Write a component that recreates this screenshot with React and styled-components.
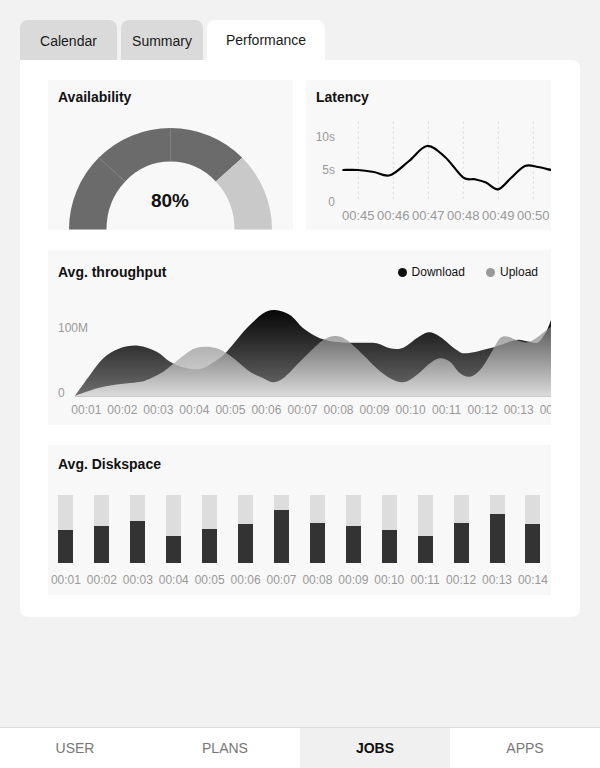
import React from 'react';
import styled, { createGlobalStyle } from 'styled-components';

const GlobalStyle = createGlobalStyle`
  html, body {
    margin: 0;
    padding: 0;
    background: #f2f2f2;
    font-family: 'Liberation Sans', Arial, sans-serif;
    color: #111;
  }
`;

const Page = styled.div`
  display: flex;
  flex-direction: column;
  min-height: 100vh;
`;

const Main = styled.main`
  flex: 1;
  padding: 20px 20px 0;
`;

const TabBar = styled.div`
  display: flex;
  gap: 4px;
`;

const Tab = styled.div`
  display: flex;
  align-items: center;
  justify-content: center;
  height: 40px;
  width: ${(props) => props.width}px;
  box-sizing: border-box;
  padding-top: ${(props) => (props.active ? '0' : '2px')};
  border-radius: 8px 8px 0 0;
  background: ${(props) => (props.active ? '#ffffff' : '#dadada')};
  font-size: 14px;
  color: #1a1a1a;
`;

const Panel = styled.section`
  display: flex;
  flex-direction: column;
  gap: 20px;
  background: #fff;
  border-radius: 0 8px 8px 8px;
  padding: 20px 29px 22px 28px;
`;

const Row = styled.div`
  display: grid;
  grid-template-columns: 245px 245px;
  gap: 13px;
`;

const Card = styled.div`
  display: flex;
  flex-direction: column;
  height: ${(props) => props.height}px;
  background: #f8f8f8;
  overflow: hidden;
`;

const CardHeader = styled.div`
  display: flex;
  align-items: center;
  justify-content: space-between;
  padding: ${(props) => props.top}px 13px 0 10px;
`;

const Title = styled.h3`
  margin: 0;
  font-size: 14px;
  line-height: 16px;
  font-weight: 700;
  color: #111;
`;

const Legend = styled.div`
  display: flex;
  align-items: center;
  gap: 21px;
`;

const LegendItem = styled.div`
  display: flex;
  align-items: center;
  gap: 5px;
  font-size: 12px;
  color: #111;
`;

const Dot = styled.span`
  width: 9px;
  height: 9px;
  border-radius: 50%;
  background: ${(props) => props.color};
`;

const Chart = styled.svg`
  display: block;
  flex-shrink: 0;
`;

const Bars = styled.div`
  display: flex;
  margin-top: 23px;
`;

const BarColumn = styled.div`
  display: flex;
  flex-direction: column;
  align-items: center;
  width: 36px;
`;

const BarTrack = styled.div`
  display: flex;
  flex-direction: column;
  justify-content: flex-end;
  width: 15px;
  height: 68px;
  background: #dddddd;
`;

const BarFill = styled.div`
  background: #333333;
`;

const BarLabel = styled.span`
  margin-top: 10px;
  font-size: 12px;
  line-height: 14px;
  color: #999;
  white-space: nowrap;
`;

const BottomNav = styled.nav`
  display: flex;
  height: 40px;
  border-top: 1px solid #dcdcdc;
  background: #fff;
`;

const NavItem = styled.div`
  flex: 1;
  display: flex;
  align-items: center;
  justify-content: center;
  font-size: 14px;
  font-weight: ${(props) => (props.active ? 700 : 400)};
  color: ${(props) => (props.active ? '#111' : '#777')};
  background: ${(props) => (props.active ? '#f0f0f0' : '#fff')};
`;

// catmull-rom -> cubic bezier
const smooth = (pts) => {
  let d = `M${pts[0][0]},${pts[0][1]}`;
  for (let i = 0; i < pts.length - 1; i++) {
    const p0 = pts[i - 1] || pts[i];
    const p1 = pts[i];
    const p2 = pts[i + 1];
    const p3 = pts[i + 2] || p2;
    const c1x = p1[0] + (p2[0] - p0[0]) / 6;
    const c1y = p1[1] + (p2[1] - p0[1]) / 6;
    const c2x = p2[0] - (p3[0] - p1[0]) / 6;
    const c2y = p2[1] - (p3[1] - p1[1]) / 6;
    d += ` C${c1x.toFixed(1)},${c1y.toFixed(1)} ${c2x.toFixed(1)},${c2y.toFixed(1)} ${p2[0]},${p2[1]}`;
  }
  return d;
};

const Gauge = () => {
  const cx = 122.5;
  const cy = 117.5;
  const R = 101.5;
  const rx = 64;
  const ry = 68;
  const rad = (a) => (a * Math.PI) / 180;
  const outer = (a) => [cx + R * Math.cos(rad(a)), cy - R * Math.sin(rad(a))];
  const inner = (a) => [cx + rx * Math.cos(rad(a)), cy - ry * Math.sin(rad(a))];
  const sector = (a1, a2) => {
    const o1 = outer(a1);
    const o2 = outer(a2);
    const i1 = inner(a1);
    const i2 = inner(a2);
    return `M${o1} A${R},${R} 0 0 1 ${o2} L${i2} A${rx},${ry} 0 0 0 ${i1} Z`;
  };
  const segments = [
    [180, 135, '#6b6b6b'],
    [135, 90, '#6b6b6b'],
    [90, 45, '#6b6b6b'],
    [45, 0, '#c9c9c9'],
  ];
  return (
    <Chart width="245" height="125" viewBox="0 -7 245 125">
      {segments.map(([a1, a2, c]) => (
        <path key={a1} d={sector(a1, a2)} fill={c} />
      ))}
      {[135, 90].map((a) => (
        <line key={a} x1={inner(a)[0]} y1={inner(a)[1]} x2={outer(a)[0]} y2={outer(a)[1]} stroke="#7c7c7c" strokeWidth="0.8" />
      ))}
      <text x={cx - 0.5} y="95.3" textAnchor="middle" fontSize="19" fontWeight="700" fill="#111">
        80%
      </text>
    </Chart>
  );
};

const latencyLine = [
  [37.3, 58], [52, 58], [68, 60], [84, 63.3], [103, 49], [121, 34], [139, 45],
  [157, 65.3], [169, 67.3], [180, 70.5], [192.3, 77.3], [205, 66], [219, 54],
  [232, 55], [245, 58],
];

const Latency = () => {
  const grid = [0, 1, 2, 3, 4, 5].map((i) => 52.3 + i * 35);
  const labels = ['00:45', '00:46', '00:47', '00:48', '00:49', '00:50'];
  return (
    <Chart width="245" height="125" viewBox="0 -7 245 125">
      {grid.map((x) => (
        <line key={x} x1={x} x2={x} y1="9.7" y2="89.7" stroke="#d6d6d6" strokeDasharray="2 3" />
      ))}
      {[['10s', 24.7], ['5s', 58], ['0', 89.7]].map(([t, y]) => (
        <text key={t} x="29" y={y + 4.3} textAnchor="end" fontSize="12" fill="#999">
          {t}
        </text>
      ))}
      {labels.map((t, i) => (
        <text key={t} x={grid[i]} y="108.3" textAnchor="middle" fontSize="13" fill="#999">
          {t}
        </text>
      ))}
      <path d={smooth(latencyLine)} fill="none" stroke="#000" strokeWidth="2.2" strokeLinecap="round" />
    </Chart>
  );
};

const download = [
  [27, 101.7], [42, 81], [55.3, 64.3], [72, 54.3], [90.3, 51.7], [108.7, 57.7],
  [122, 67.7], [136, 73.5], [152, 75], [166, 68], [178.7, 57.7], [198.7, 34.3],
  [215.3, 19.3], [227, 16], [242, 21], [255.3, 34.3], [268.7, 42.7], [282, 47],
  [298.7, 48.7], [315.3, 48.7], [328.7, 49.3], [342, 54.3], [355.3, 53.7],
  [368.7, 44.3], [380.3, 38.3], [392, 42.7], [408.7, 56], [418.7, 59.3], [442, 54.3],
  [452, 51], [468.7, 46], [480, 47.5], [490, 48.5], [498, 38], [503, 26],
];

const upload = [
  [27, 101.7], [55.3, 92.7], [88.7, 88.3], [98.7, 86], [115.3, 77.7], [132, 64.3],
  [145.3, 55], [157, 52.7], [168.7, 54.3], [178.7, 59.3], [190, 68], [202, 77.7],
  [215.3, 84.3], [225.3, 88.3], [235.3, 84.3], [248.7, 71], [262, 57.7], [275.3, 46],
  [287, 42], [298.7, 46], [315.3, 61], [328.7, 74.3], [342, 84.3], [355.3, 88.3],
  [368.7, 81], [382, 69.3], [392, 64.3], [402, 67.7], [412, 79.3], [422, 82.7],
  [432, 76], [442, 61], [452, 44.3], [460.3, 42.7], [468.7, 46], [482, 47.7],
  [503, 32.7],
];

const Throughput = () => {
  const labels = Array.from({ length: 14 }, (_, i) => `00:${String(i + 1).padStart(2, '0')}`);
  const area = (pts) => `${smooth(pts)} L503,102 L27,102 Z`;
  return (
    <Chart width="503" height="145" viewBox="0 -14 503 145">
      <defs>
        <linearGradient id="dl" gradientUnits="userSpaceOnUse" x1="0" y1="15" x2="0" y2="102">
          <stop offset="0" stopColor="#050505" />
          <stop offset="1" stopColor="#6e6e6e" />
        </linearGradient>
        <linearGradient id="ul" gradientUnits="userSpaceOnUse" x1="0" y1="40" x2="0" y2="102">
          <stop offset="0" stopColor="rgb(136,136,136)" stopOpacity="0.7" />
          <stop offset="1" stopColor="rgb(228,228,228)" stopOpacity="0.92" />
        </linearGradient>
      </defs>
      <text x="10" y="38.3" fontSize="12" fill="#999">100M</text>
      <text x="10" y="103.3" fontSize="12" fill="#999">0</text>
      <path d={area(download)} fill="url(#dl)" />
      <path d={area(upload)} fill="url(#ul)" />
      <line x1="27" x2="503" y1="102.5" y2="102.5" stroke="#c8c8c8" />
      {labels.map((t, i) => (
        <text key={t} x={38.3 + i * 36.03} y="120.3" textAnchor="middle" fontSize="12" fill="#999">
          {t}
        </text>
      ))}
    </Chart>
  );
};

const disk = [33, 37, 42, 27, 34, 39, 53, 40, 37, 33, 27, 40, 49, 39];

export default function App() {
  return (
    <Page>
      <GlobalStyle />
      <Main>
        <TabBar>
          <Tab width={97}>Calendar</Tab>
          <Tab width={82}>Summary</Tab>
          <Tab width={118} active>
            Performance
          </Tab>
        </TabBar>
        <Panel>
          <Row>
            <Card height={150}>
              <CardHeader top={9}>
                <Title>Availability</Title>
              </CardHeader>
              <Gauge />
            </Card>
            <Card height={150}>
              <CardHeader top={9}>
                <Title>Latency</Title>
              </CardHeader>
              <Latency />
            </Card>
          </Row>
          <Card height={175}>
            <CardHeader top={14}>
              <Title>Avg. throughput</Title>
              <Legend>
                <LegendItem>
                  <Dot color="#111" />
                  Download
                </LegendItem>
                <LegendItem>
                  <Dot color="#999" />
                  Upload
                </LegendItem>
              </Legend>
            </CardHeader>
            <Throughput />
          </Card>
          <Card height={150}>
            <CardHeader top={11}>
              <Title>Avg. Diskspace</Title>
            </CardHeader>
            <Bars>
              {disk.map((v, i) => (
                <BarColumn key={i}>
                  <BarTrack>
                    <BarFill style={{ height: v }} />
                  </BarTrack>
                  <BarLabel>{`00:${String(i + 1).padStart(2, '0')}`}</BarLabel>
                </BarColumn>
              ))}
            </Bars>
          </Card>
        </Panel>
      </Main>
      <BottomNav>
        <NavItem>USER</NavItem>
        <NavItem>PLANS</NavItem>
        <NavItem active>JOBS</NavItem>
        <NavItem>APPS</NavItem>
      </BottomNav>
    </Page>
  );
}
